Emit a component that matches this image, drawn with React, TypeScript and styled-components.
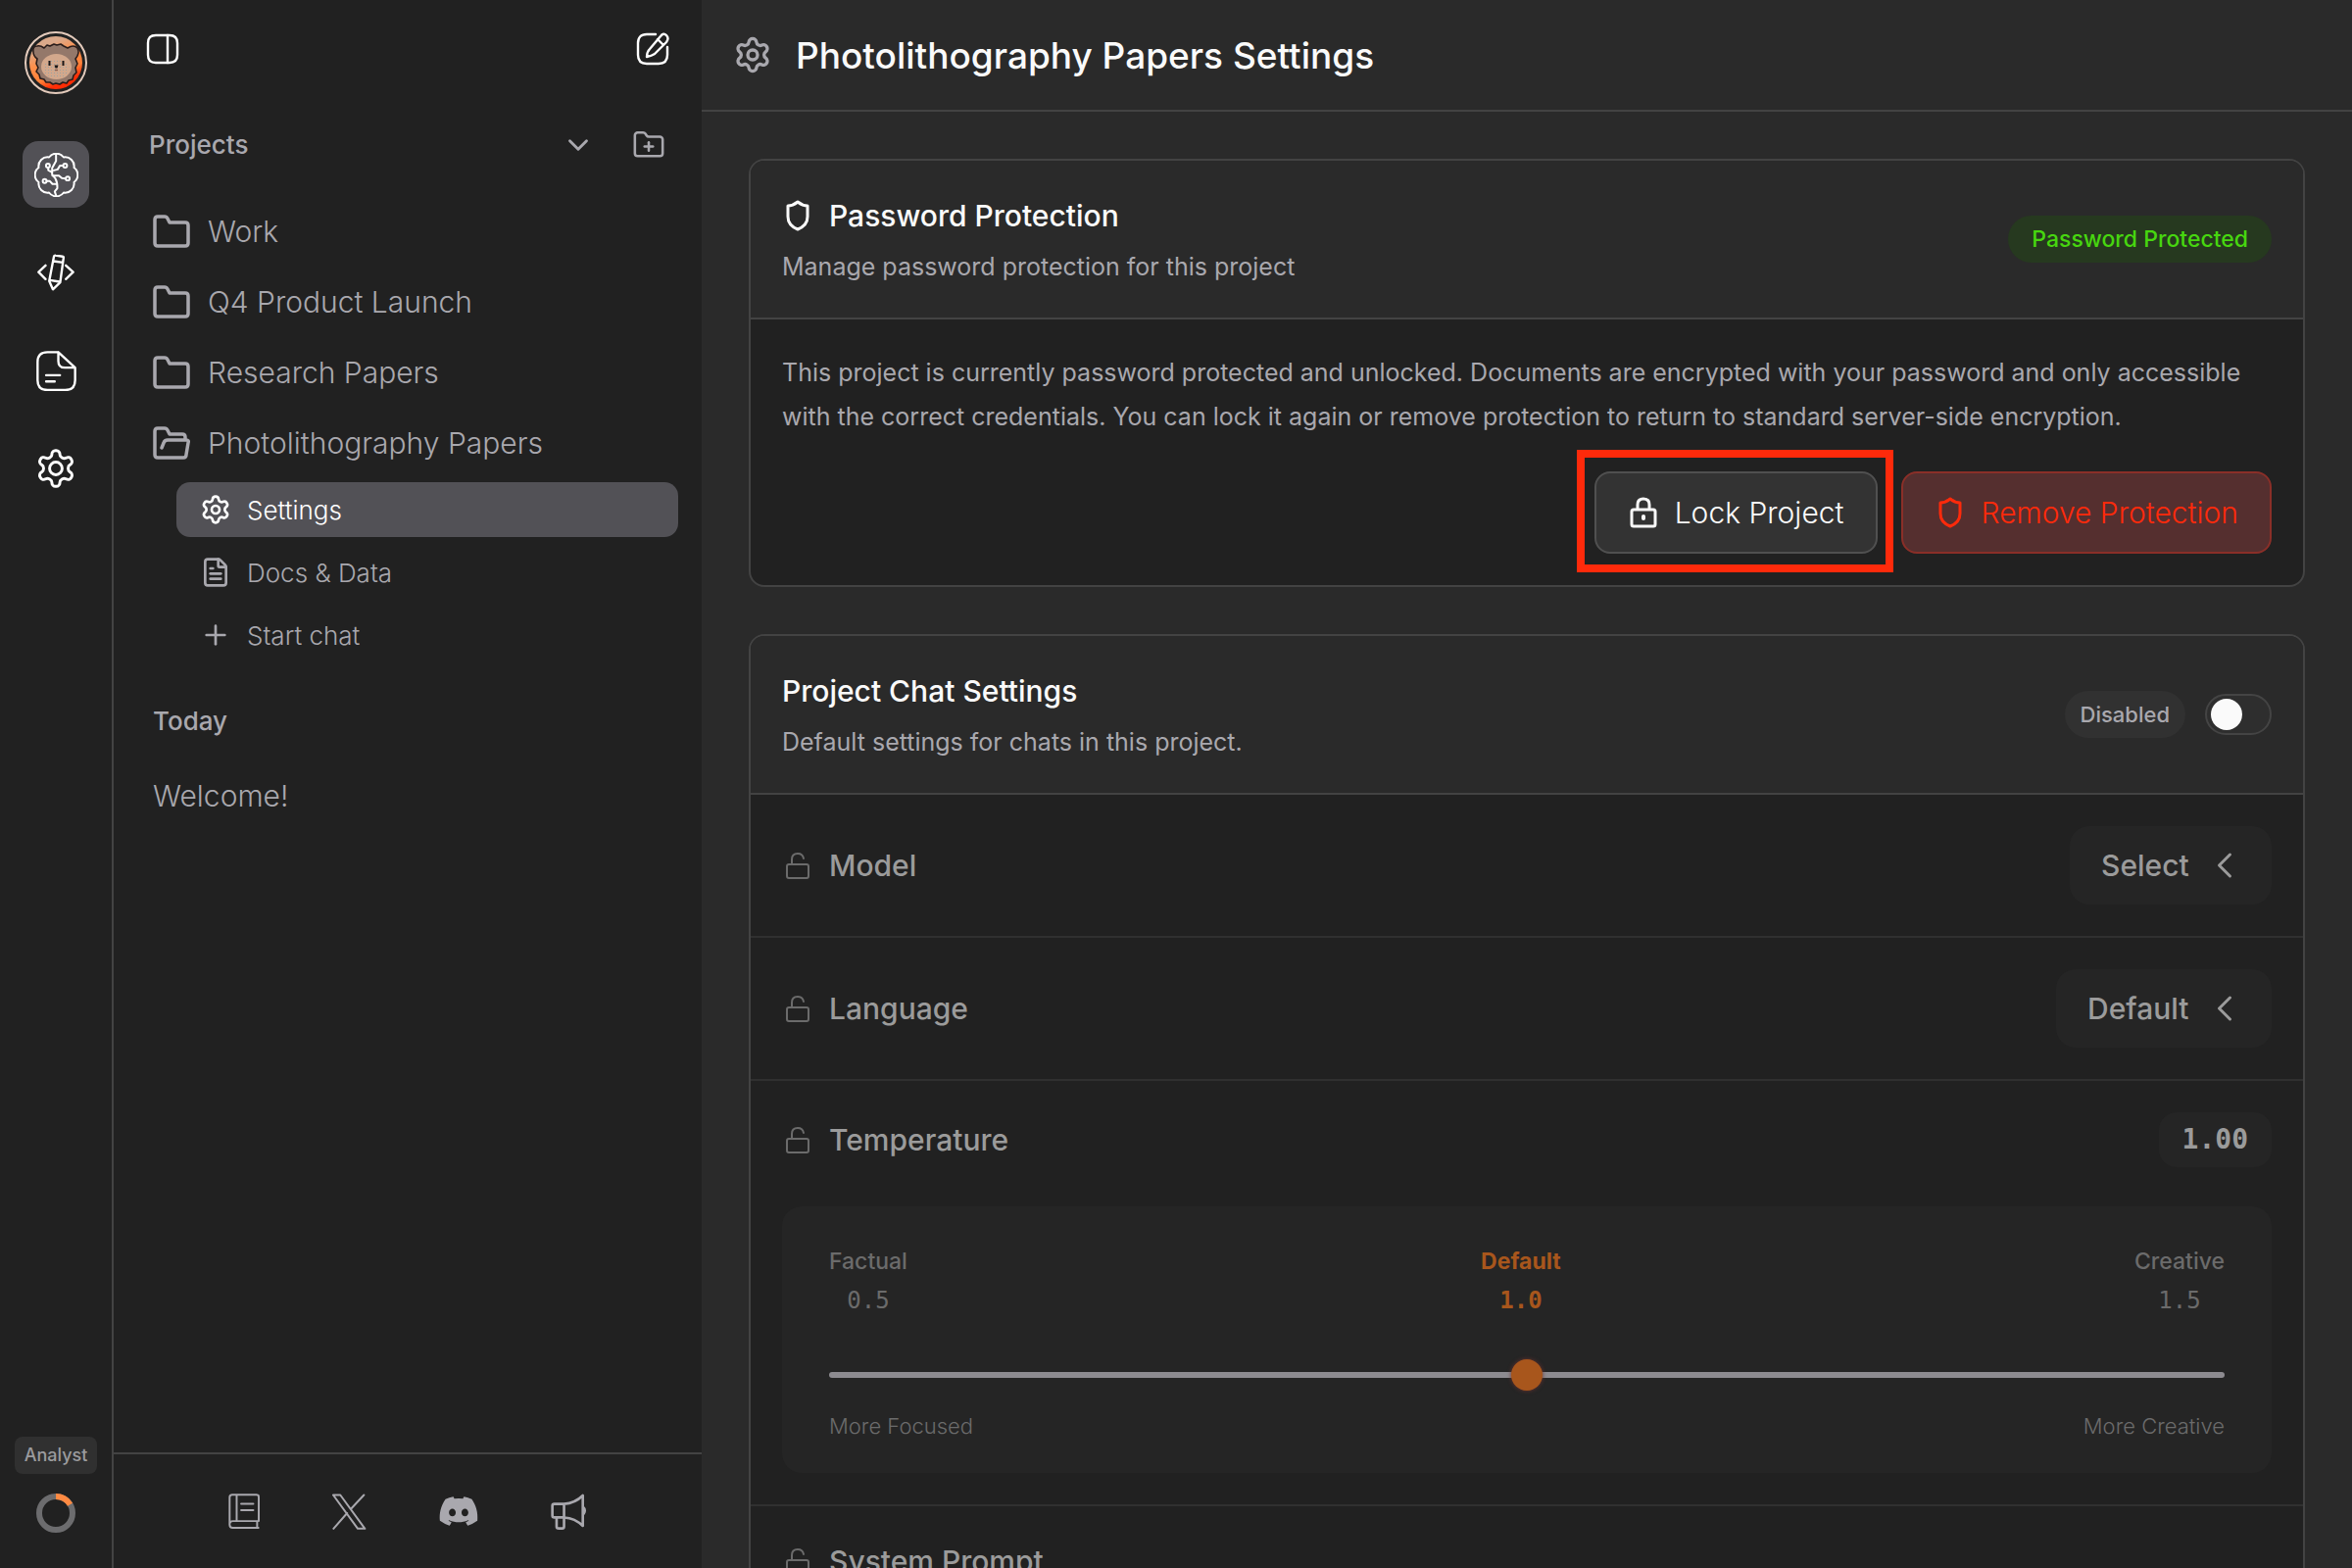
import React from "react";
import styled, { createGlobalStyle, css } from "styled-components";
import { Settings, FileText, Plus, ChevronDown, ChevronLeft, FolderPlus } from "lucide-react";
import { FaDiscord } from "react-icons/fa6";

const c = {
  side: "#212121",
  main: "#2a2a2a",
  line: "#434343",
  softLine: "#303030",
  text: "#fafafa",
  muted: "#a9a8ae",
  dim: "#9b9b9b",
  faint: "#6b6b6b",
  active: "#525156",
  chip: "#252525",
  orange: "#a8561c",
  red: "#ff2a0b",
};

const Global = createGlobalStyle`
  *, *::before, *::after { box-sizing: border-box; }
  body { margin: 0; background: ${c.main}; color: ${c.muted}; font-family: Inter, "Liberation Sans", sans-serif; font-weight: 300; }
  button, input, select { font: inherit; color: inherit; margin: 0; }
  h1, h2, p { margin: 0; }
  ul { list-style: none; margin: 0; padding: 0; }
  a { color: inherit; text-decoration: none; }
  svg { display: block; flex: none; }
`;

const Shell = styled.div`
  display: flex;
  height: 100vh;
  overflow: hidden;
`;

/* Rail */
const Rail = styled.nav`
  flex: none;
  width: 116px;
  background: ${c.side};
  border-right: 2px solid ${c.line};
  display: flex;
  flex-direction: column;
  align-items: center;
  gap: 32px;
  padding: 32px 0 36px;
`;

const AvatarButton = styled.button`
  border: 0;
  padding: 0;
  background: none;
  margin-bottom: 16px;
`;

const RailLink = styled.a<{ $active?: boolean }>`
  width: 68px;
  height: 68px;
  border-radius: 16px;
  display: grid;
  place-items: center;
  color: #fff;
  background: ${(p) => (p.$active ? c.active : "transparent")};
`;

const Plan = styled.div`
  margin-top: auto;
  display: flex;
  flex-direction: column;
  align-items: center;
  gap: 20px;
`;

const PlanBadge = styled.span`
  width: 84px;
  height: 38px;
  border-radius: 8px;
  background: #303030;
  color: #9b9b9e;
  font-size: 18px;
  font-weight: 500;
  line-height: 38px;
  text-align: center;
`;

/* Sidebar */
const Sidebar = styled.aside`
  flex: none;
  width: 600px;
  background: ${c.side};
  display: flex;
  flex-direction: column;
`;

const SideTop = styled.div`
  height: 100px;
  padding: 0 33px;
  color: #fff;
  display: flex;
  align-items: center;
  justify-content: space-between;
`;

const IconButton = styled.button`
  border: 0;
  padding: 0;
  background: none;
  display: grid;
  place-items: center;
`;

const ProjectsHead = styled.div`
  height: 96px;
  padding: 0 37px 0 36px;
  display: flex;
  align-items: center;
  gap: 38px;
`;

const SideTitle = styled.h2`
  flex: 1;
  font-size: 26px;
  line-height: 56px;
  font-weight: 500;
`;

const ProjectList = styled.ul`
  padding: 4px 24px 0 40px;
`;

const ProjectLink = styled.a`
  height: 72px;
  display: flex;
  align-items: center;
  gap: 18px;
  font-size: 30px;
`;

const SubList = styled.ul`
  display: grid;
  gap: 8px;
  padding: 4px 0 0 24px;
`;

const SubLink = styled.a<{ $active?: boolean }>`
  height: 56px;
  padding: 0 24px;
  border-radius: 14px;
  display: flex;
  align-items: center;
  gap: 16px;
  font-size: 26px;
  color: ${(p) => (p.$active ? "#fff" : c.muted)};
  background: ${(p) => (p.$active ? c.active : "transparent")};
`;

const History = styled.section`
  padding: 32px 40px;
`;

const HistoryLink = styled.a`
  display: block;
  margin-top: 20px;
  font-size: 30px;
  line-height: 56px;
`;

const SideFooter = styled.footer`
  margin-top: auto;
  height: 118px;
  border-top: 2px solid ${c.line};
  display: flex;
  align-items: center;
  justify-content: center;
  gap: 73px;
`;

/* Main */
const Main = styled.main`
  flex: 1;
  min-width: 0;
  display: flex;
  flex-direction: column;
`;

const PageHead = styled.header`
  flex: none;
  height: 114px;
  padding: 0 32px;
  border-bottom: 2px solid ${c.line};
  display: flex;
  align-items: center;
  gap: 24px;
`;

const PageTitle = styled.h1`
  color: ${c.text};
  font-size: 37px;
  font-weight: 500;
`;

const Content = styled.div`
  flex: 1;
  min-height: 0;
  overflow: hidden;
  padding: 48px;
`;

const Card = styled.section`
  border: 2px solid ${c.line};
  border-radius: 16px;
  background: ${c.side};
  overflow: hidden;
  margin-bottom: 48px;
`;

const CardHead = styled.header`
  display: flex;
  align-items: center;
  padding: 28px 32px;
  background: ${c.main};
  border-bottom: 2px solid ${c.line};
`;

const CardHeadText = styled.div`
  flex: 1;
`;

const CardTitle = styled.h2`
  display: flex;
  align-items: center;
  gap: 16px;
  color: ${c.text};
  font-size: 30px;
  line-height: 56px;
  font-weight: 500;
`;

const CardHint = styled.p`
  font-size: 25px;
  font-weight: 400;
  line-height: 48px;
`;

const Pill = styled.span<{ $ok?: boolean }>`
  height: 48px;
  border-radius: 24px;
  line-height: 48px;
  font-weight: 500;
  ${(p) =>
    p.$ok
      ? css`
          padding: 0 24px;
          background: #26391f;
          color: #47d60f;
          font-size: 23px;
        `
      : css`
          padding: 0 16px;
          background: #313131;
          color: ${c.muted};
          font-size: 22px;
        `}
`;

const Switch = styled.input`
  appearance: none;
  width: 68px;
  height: 42px;
  margin-left: 20px;
  border: 2px solid #444;
  border-radius: 21px;
  background: #2e2e2e;
  padding: 3px 4px;
  &::before {
    content: "";
    display: block;
    width: 32px;
    height: 32px;
    border-radius: 50%;
    background: ${c.text};
  }
  &:checked::before {
    margin-left: auto;
  }
`;

const CardBody = styled.div`
  padding: 32px;
`;

const Paragraph = styled.p`
  padding-right: 16px;
  font-size: 25px;
  font-weight: 400;
  line-height: 45px;
`;

const Actions = styled.div`
  display: flex;
  justify-content: flex-end;
  gap: 24px;
  margin-top: 33px;
`;

const ActionButton = styled.button<{ $danger?: boolean }>`
  height: 84px;
  padding: 0 32px;
  border-radius: 16px;
  display: flex;
  align-items: center;
  gap: 16px;
  font-size: 30px;
  font-weight: 300;
  border: 2px solid ${(p) => (p.$danger ? "#8a2f28" : "#505050")};
  background: ${(p) => (p.$danger ? "#552f2f" : "#333333")};
  color: ${(p) => (p.$danger ? c.red : c.text)};
`;

const Highlight = styled.div`
  position: relative;
  &::after {
    content: "";
    position: absolute;
    inset: -22px -16px -19px -18px;
    border: 8px solid ${c.red};
    pointer-events: none;
  }
`;

const Setting = styled.div`
  padding: 32px;
  & + & {
    border-top: 2px solid ${c.softLine};
  }
`;

const SettingRow = styled.div<{ $h: number }>`
  display: flex;
  align-items: center;
  min-height: ${(p) => p.$h}px;
`;

const SettingLabel = styled.label`
  flex: 1;
  display: flex;
  align-items: center;
  gap: 16px;
  color: ${c.dim};
  font-size: 30px;
  font-weight: 500;
`;

const SelectWrap = styled.div`
  display: flex;
  align-items: center;
  position: relative;
  color: ${c.dim};
  svg {
    position: absolute;
    right: 26px;
    pointer-events: none;
  }
`;

const Select = styled.select`
  appearance: none;
  height: 80px;
  padding: 0 84px 0 32px;
  border: 0;
  border-radius: 20px;
  background: ${c.chip};
  font-size: 30px;
  font-weight: 500;
  opacity: 1;
`;

const ValueChip = styled.output`
  height: 56px;
  padding: 0 24px;
  border-radius: 18px;
  background: ${c.chip};
  color: ${c.dim};
  font: 700 28px/56px "DejaVu Sans Mono", monospace;
`;

const SliderPanel = styled.div`
  margin-top: 40px;
  padding: 36px 48px 28px;
  border-radius: 20px;
  background: ${c.chip};
  color: ${c.faint};
`;

const Spread = styled.div`
  display: flex;
  justify-content: space-between;
  font-size: 22px;
  line-height: 40px;
`;

const Mark = styled.div<{ $on?: boolean }>`
  text-align: center;
  font-size: 23px;
  font-weight: ${(p) => (p.$on ? 700 : 500)};
  color: ${(p) => (p.$on ? c.orange : c.faint)};
`;

const MarkValue = styled.div<{ $on?: boolean }>`
  font: ${(p) => (p.$on ? 700 : 400)} 24px/40px "DejaVu Sans Mono", monospace;
`;

const Range = styled.input`
  appearance: none;
  display: block;
  width: 100%;
  height: 40px;
  margin: 36px 0 12px;
  background: none;
  &::-webkit-slider-runnable-track {
    height: 6px;
    border-radius: 3px;
    background: #8d8b90;
  }
  &::-webkit-slider-thumb {
    appearance: none;
    width: 32px;
    height: 32px;
    margin-top: -13px;
    border-radius: 50%;
    background: ${c.orange};
    box-shadow: 0 0 4px #6b3330;
  }
`;

type SvgProps = { box: string; w: number; h: number; sw?: number; children: React.ReactNode };
const Glyph = ({ box, w, h, sw = 2, children }: SvgProps) => (
  <svg viewBox={box} width={w} height={h} fill="none" stroke="currentColor" strokeWidth={sw} strokeLinecap="round" strokeLinejoin="round" aria-hidden="true">
    {children}
  </svg>
);

const Avatar = () => (
  <svg viewBox="0 0 64 64" width="64" height="64" aria-hidden="true">
    <defs>
      <linearGradient id="sky" x1="0.3" y1="0" x2="0.75" y2="1">
        <stop offset="0.15" stopColor="#dba98a" />
        <stop offset="0.4" stopColor="#ff8f4a" />
        <stop offset="0.68" stopColor="#ff8038" />
        <stop offset="0.85" stopColor="#ff2d05" />
      </linearGradient>
      <pattern id="dots" width="3" height="3" patternUnits="userSpaceOnUse">
        <rect width="1" height="1" fill="#9aa3a3" />
      </pattern>
    </defs>
    <circle cx="32" cy="32" r="31" fill="none" stroke="#e3cabb" strokeWidth="2" />
    <circle cx="32" cy="32" r="27" fill="url(#sky)" />
    <path
      d="M9 21Q8 15 13 15Q16 14 20 17L23 14L26 15L30 13L33 14L37 13L40 15L44 17Q50 13 54 17Q57 22 52 28L54 33L52 37L53 42L50 45L49 49L45 50L43 53L39 52L36 54L32 53L29 54L26 52L22 52L20 49L16 48L15 44L12 41L14 37L12 33L13 28Q9 25 9 21Z"
      fill="#94786a"
      stroke="#2a1d1b"
      strokeWidth="1.6"
      strokeLinejoin="round"
    />
    <ellipse cx="32.500" cy="36" rx="15.500" ry="13" fill="#d3a88c" />
    <ellipse cx="32.500" cy="38" rx="13" ry="10" fill="url(#dots)" />
    <path d="M25.500 30v5M39.500 30v5" stroke="#1b1717" strokeWidth="2" />
    <path d="M30.500 34.500h4l-1 3h-2z" fill="#1b1717" />
    <path d="M31 39.500h3" stroke="#8a5f50" strokeWidth="1.5" />
  </svg>
);

const Brain = () => (
  <Glyph box="43 33 136 136" w={45} h={45} sw={6}>
    <path d="M56.500 78.400A28 28 0 0 1 88.400 46.500A28 28 0 0 1 133.600 46.500A28 28 0 0 1 165.500 78.400A28 28 0 0 1 165.500 123.600A28 28 0 0 1 133.600 155.500A28 28 0 0 1 88.400 155.500A28 28 0 0 1 56.500 123.600A28 28 0 0 1 56.500 78.400Z" />
    <path d="M110 38V58L98 80V100L108 112Q115 124 114 142L106 152L110 164" />
    <circle cx="85" cy="72" r="6" />
    <circle cx="138" cy="72" r="6" />
    <circle cx="146" cy="112" r="6" />
    <circle cx="75" cy="120" r="6" />
    <path d="M86 78V86L98 93M132 72H122L115 84L103 87M140 112L128 111L119 103H99M81 120H91L99 129H113" />
  </Glyph>
);

const CodePencil = () => (
  <Glyph box="55 346 112 112" w={38} h={38} sw={7}>
    <path d="M80 381L59 401L80 422M141 381L163 401L141 422" />
    <path d="M110 351L131 354Q135 355 134 359L124 432L102 453L91 428L105 355Q106 350 110 351ZM104 368L132 372M93 425L122 430" />
  </Glyph>
);

const Note = () => (
  <Glyph box="50 641 122 122" w={41} h={41} sw={7}>
    <path d="M117 645H84Q54 645 54 675V730Q54 760 84 760H138Q168 760 168 730V692L117 645V672Q117 692 137 692H168" />
    <path d="M80 715H122M80 734H106" />
  </Glyph>
);

const RoundGear = () => (
  <Glyph box="0 0 24 24" w={44} h={44} sw={1.6}>
    <path d="M12.220 2h-.44a2 2 0 0 0-2 2v.18a2 2 0 0 1-1 1.730l-.43.25a2 2 0 0 1-2 0l-.15-.08a2 2 0 0 0-2.730.73l-.22.38a2 2 0 0 0 .73 2.730l.15.1a2 2 0 0 1 1 1.720v.51a2 2 0 0 1-1 1.740l-.15.09a2 2 0 0 0-.73 2.730l.22.38a2 2 0 0 0 2.730.73l.15-.08a2 2 0 0 1 2 0l.43.25a2 2 0 0 1 1 1.730V20a2 2 0 0 0 2 2h.44a2 2 0 0 0 2-2v-.18a2 2 0 0 1 1-1.730l.43-.25a2 2 0 0 1 2 0l.15.08a2 2 0 0 0 2.730-.73l.22-.39a2 2 0 0 0-.73-2.730l-.15-.08a2 2 0 0 1-1-1.740v-.5a2 2 0 0 1 1-1.740l.15-.09a2 2 0 0 0 .73-2.730l-.22-.38a2 2 0 0 0-2.730-.73l-.15.08a2 2 0 0 1-2 0l-.43-.25a2 2 0 0 1-1-1.730V4a2 2 0 0 0-2-2z" />
    <circle cx="12" cy="12" r="3.500" />
  </Glyph>
);

const UsageRing = () => (
  <svg viewBox="0 0 40 40" width="40" height="40" fill="none" strokeWidth="6" aria-hidden="true">
    <circle cx="20" cy="20" r="17" stroke="#6c6c6e" />
    <path d="M20 3A17 17 0 0 1 34.500 11.200" stroke="#ff8a42" />
  </svg>
);

const Panel = () => (
  <Glyph box="0 0 34 32" w={34} h={32} sw={2.4}>
    <path d="M10 2H24Q32 2 32 10V22Q32 30 24 30H10Q2 30 2 22V10Q2 2 10 2Z" />
    <path d="M22 2V30" />
  </Glyph>
);

const Compose = () => (
  <Glyph box="0 0 34 34" w={34} h={34} sw={2.4}>
    <path d="M20 2H11Q2 2 2 11V23Q2 32 11 32H23Q32 32 32 23V15" />
    <path d="M25 4Q28 0 31 3Q34 6 31 10L19 22Q16 24 11 25Q11 20 14 17ZM22 7L28 13" />
  </Glyph>
);

const Folder = () => (
  <Glyph box="0 0 38 34" w={38} h={34} sw={3.5}>
    <path d="M5 2H12Q14 2 15 4L17 8H33Q36 8 36 11V29Q36 32 33 32H5Q2 32 2 29V5Q2 2 5 2Z" />
  </Glyph>
);

const FolderOpen = () => (
  <Glyph box="0 0 38 34" w={38} h={34} sw={3.5}>
    <path d="M33 14V11Q33 8 30 8H17L15 4Q14 2 12 2H5Q2 2 2 5V29Q2 32 5 32H31Q34 32 34 29L36 17Q37 14 34 14H15Q12 14 11 17L9 22" />
  </Glyph>
);

const Shield = () => (
  <Glyph box="-1 -1 32 34" w={32} h={34} sw={3}>
    <path d="M15 2Q10 6 5 6V17Q5 26 15 30Q25 26 25 17V6Q20 6 15 2Z" />
  </Glyph>
);

const Lock = () => (
  <Glyph box="0 0 32 32" w={32} h={32} sw={3}>
    <path d="M10 13V8Q10 2 16 2Q22 2 22 8V13M6 13H26Q28 13 28 15V28Q28 30 26 30H6Q4 30 4 28V15Q4 13 6 13Z" />
    <path d="M16 20V22" strokeWidth="4" />
  </Glyph>
);

const Unlock = () => (
  <Glyph box="0 0 32 28" w={32} h={28} sw={2}>
    <path d="M10 13V8Q10 2 16 2Q21 2 22 7M7 13H25Q27 13 27 15V25Q27 27 25 27H7Q5 27 5 25V15Q5 13 7 13Z" stroke="#6b6b6b" />
  </Glyph>
);

const Book = () => (
  <Glyph box="40 40 98 110" w={32} h={36} sw={6}>
    <path d="M44 138V52Q44 44 52 44H128Q135 44 135 51V126H54Q44 126 44 137Q44 147 54 147H134M130 126V147M66 44V126M80 72H118M80 92H118" />
  </Glyph>
);

const XLogo = () => (
  <Glyph box="350 40 109 111" w={36} h={37} sw={6}>
    <path d="M356 44H378L454 148H432ZM451 44L410 88M357 148L399 100" />
  </Glyph>
);

const Megaphone = () => (
  <Glyph box="1026 40 110 112" w={37} h={37} sw={8}>
    <path d="M1036 72H1066Q1100 70 1124 46V140Q1100 116 1066 114H1036Q1030 114 1030 108V78Q1030 72 1036 72ZM1066 72V142Q1066 148 1060 148H1050Q1043 148 1043 142V114" />
    <path d="M1127 84Q1133 93 1127 102Z" />
  </Glyph>
);

const projects = ["Work", "Q4 Product Launch", "Research Papers"];

export default function App() {
  return (
    <>
      <Global />
      <Shell>
        <Rail aria-label="Primary">
          <AvatarButton aria-label="Account">
            <Avatar />
          </AvatarButton>
          <RailLink href="#assistant" $active aria-label="Assistant"><Brain /></RailLink>
          <RailLink href="#code" aria-label="Code"><CodePencil /></RailLink>
          <RailLink href="#documents" aria-label="Documents"><Note /></RailLink>
          <RailLink href="#preferences" aria-label="Preferences"><RoundGear /></RailLink>
          <Plan>
            <PlanBadge>Analyst</PlanBadge>
            <UsageRing />
          </Plan>
        </Rail>

        <Sidebar>
          <SideTop>
            <IconButton aria-label="Toggle sidebar"><Panel /></IconButton>
            <IconButton aria-label="New chat"><Compose /></IconButton>
          </SideTop>
          <ProjectsHead>
            <SideTitle>Projects</SideTitle>
            <IconButton aria-label="Collapse projects"><ChevronDown size={34} strokeWidth={2} /></IconButton>
            <IconButton aria-label="New project"><FolderPlus size={34} strokeWidth={1.8} /></IconButton>
          </ProjectsHead>
          <ProjectList>
            {projects.map((name) => (
              <li key={name}>
                <ProjectLink href="#project"><Folder />{name}</ProjectLink>
              </li>
            ))}
            <li>
              <ProjectLink href="#project"><FolderOpen />Photolithography Papers</ProjectLink>
              <SubList>
                <li><SubLink href="#settings" $active><Settings size={32} />Settings</SubLink></li>
                <li><SubLink href="#docs"><FileText size={32} />Docs &amp; Data</SubLink></li>
                <li><SubLink href="#chat"><Plus size={32} strokeWidth={2} />Start chat</SubLink></li>
              </SubList>
            </li>
          </ProjectList>
          <History>
            <SideTitle>Today</SideTitle>
            <HistoryLink href="#welcome">Welcome!</HistoryLink>
          </History>
          <SideFooter>
            <a href="#guide" aria-label="Guide"><Book /></a>
            <a href="#x" aria-label="X"><XLogo /></a>
            <a href="#discord" aria-label="Discord"><FaDiscord size={42} /></a>
            <a href="#news" aria-label="Announcements"><Megaphone /></a>
          </SideFooter>
        </Sidebar>

        <Main>
          <PageHead>
            <Settings size={40} strokeWidth={2} />
            <PageTitle>Photolithography Papers Settings</PageTitle>
          </PageHead>
          <Content>
            <Card>
              <CardHead>
                <CardHeadText>
                  <CardTitle><Shield />Password Protection</CardTitle>
                  <CardHint>Manage password protection for this project</CardHint>
                </CardHeadText>
                <Pill $ok>Password Protected</Pill>
              </CardHead>
              <CardBody>
                <Paragraph>
                  This project is currently password protected and unlocked. Documents are encrypted with your password and only
                  accessible with the correct credentials. You can lock it again or remove protection to return to standard
                  server-side encryption.
                </Paragraph>
                <Actions>
                  <Highlight>
                    <ActionButton><Lock />Lock Project</ActionButton>
                  </Highlight>
                  <ActionButton $danger><Shield />Remove Protection</ActionButton>
                </Actions>
              </CardBody>
            </Card>

            <Card>
              <CardHead>
                <CardHeadText>
                  <CardTitle>Project Chat Settings</CardTitle>
                  <CardHint>Default settings for chats in this project.</CardHint>
                </CardHeadText>
                <Pill>Disabled</Pill>
                <Switch type="checkbox" role="switch" aria-label="Project chat settings" />
              </CardHead>
              <Setting>
                <SettingRow $h={80}>
                  <SettingLabel htmlFor="model"><Unlock />Model</SettingLabel>
                  <SelectWrap>
                    <Select id="model"><option>Select</option></Select>
                    <ChevronLeft size={44} strokeWidth={1.6} />
                  </SelectWrap>
                </SettingRow>
              </Setting>
              <Setting>
                <SettingRow $h={80}>
                  <SettingLabel htmlFor="language"><Unlock />Language</SettingLabel>
                  <SelectWrap>
                    <Select id="language"><option>Default</option></Select>
                    <ChevronLeft size={44} strokeWidth={1.6} />
                  </SelectWrap>
                </SettingRow>
              </Setting>
              <Setting>
                <SettingRow $h={56}>
                  <SettingLabel htmlFor="temperature"><Unlock />Temperature</SettingLabel>
                  <ValueChip htmlFor="temperature">1.00</ValueChip>
                </SettingRow>
                <SliderPanel>
                  <Spread>
                    <Mark>Factual<MarkValue>0.5</MarkValue></Mark>
                    <Mark $on>Default<MarkValue $on>1.0</MarkValue></Mark>
                    <Mark>Creative<MarkValue>1.5</MarkValue></Mark>
                  </Spread>
                  <Range id="temperature" type="range" min="0.5" max="1.5" step="0.01" defaultValue="1" />
                  <Spread>
                    <span>More Focused</span>
                    <span>More Creative</span>
                  </Spread>
                </SliderPanel>
              </Setting>
              <Setting>
                <SettingRow $h={48}>
                  <SettingLabel as="div"><Unlock />System Prompt</SettingLabel>
                </SettingRow>
              </Setting>
            </Card>
          </Content>
        </Main>
      </Shell>
    </>
  );
}
